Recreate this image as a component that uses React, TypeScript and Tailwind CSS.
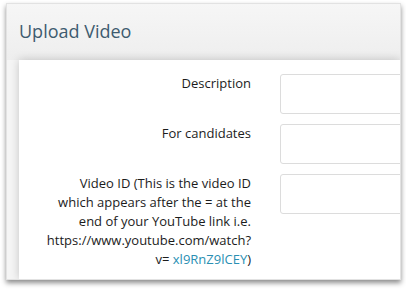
import React from "react";

export default function App() {
  const font = { fontFamily: '"Open Sans", "Noto Sans", sans-serif' };
  return (
    <div className="w-[406px] h-[292px] bg-white overflow-hidden" style={font}>
      <div className="ml-[6px] mt-[3px] w-[395px] h-[277px] bg-[#f5f5f5] border border-[#e2e2e2] shadow-[0_3px_5px_rgba(0,0,0,0.45)] overflow-hidden flex flex-col">
        <div className="h-[56px] shrink-0 pl-[12px] flex items-center bg-gradient-to-b from-[#f6f6f6] to-[#eeeeee]">
          <h1 className="text-[18px] text-[#3e5b6f] leading-none -mt-[2px]">Upload Video</h1>
        </div>
        <div className="ml-[12px] flex-1 bg-white shadow-[0_0_9px_rgba(0,0,0,0.2)] pt-[14px]">
          <div className="grid grid-cols-[232px_200px] gap-x-[29px] gap-y-[10px] text-[13px] leading-[19px] text-[#1c1c1c]">
            <div className="text-right">Description</div>
            <div className="h-[40px] border border-[#dcdcdc] rounded-[3px]" />
            <div className="text-right">For candidates</div>
            <div className="h-[40px] border border-[#dcdcdc] rounded-[3px]" />
            <div className="text-right">
              Video ID (This is the video ID
              <br />
              which appears after the = at the
              <br />
              end of your YouTube link i.e.
              <br />
              https://www.youtube.com/watch?
              <br />
              v= <span className="text-[#2a8fb3]">xl9RnZ9lCEY</span>)
            </div>
            <div className="h-[40px] border border-[#dcdcdc] rounded-[3px]" />
          </div>
        </div>
      </div>
    </div>
  );
}
